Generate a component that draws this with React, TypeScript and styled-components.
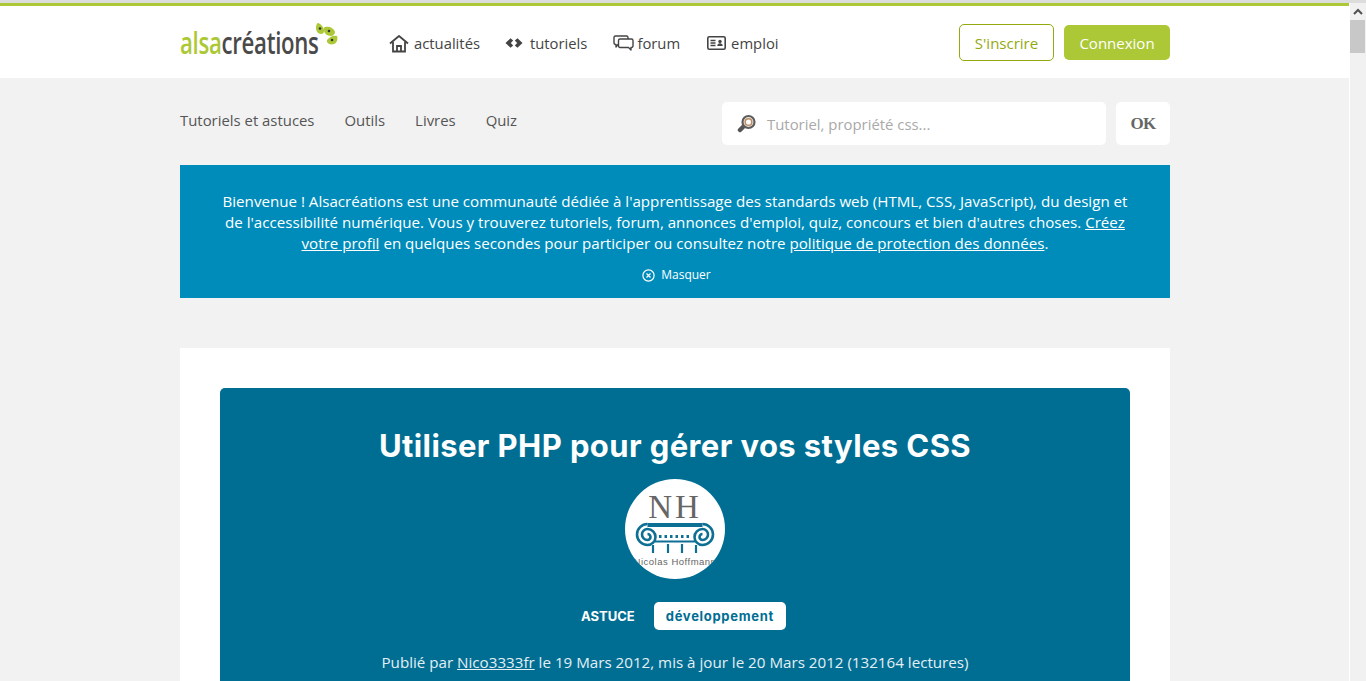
import React from 'react';
import styled, { createGlobalStyle } from 'styled-components';

const Global = createGlobalStyle`
  html, body {
    margin: 0;
    padding: 0;
    height: 100%;
    overflow: hidden;
    background: #f2f2f2;
  }
  body {
    font-family: "Open Sans", "Noto Sans", sans-serif;
    color: #444;
  }
  * { box-sizing: border-box; }
`;

const Shell = styled.div`
  display: grid;
  grid-template-columns: 1fr 16px;
  height: 681px;
  overflow: hidden;
`;

const Page = styled.div`
  min-width: 0;
  background: #f2f2f2;
  box-shadow: inset -1px 0 #fff;
`;

const Container = styled.div`
  width: 990px;
  margin: 0 auto;
`;

const Header = styled.header`
  height: 78px;
  background: #fff;
  border-top: 3px solid #dcdcdc;
`;

const GreenBar = styled.div`
  height: 3px;
  margin-right: 1px;
  background: #acc837;
`;

const HeaderRow = styled(Container)`
  display: flex;
  align-items: center;
  height: 72px;
  padding-top: 2px;
`;

const Logo = styled.a`
  display: flex;
  align-items: flex-start;
  width: 158px;
  height: 40px;
  margin-right: 51px;
  position: relative;
`;

const LogoText = styled.span`
  display: inline-block;
  font-family: "Open Sans", sans-serif;
  font-size: 30px;
  font-weight: 600;
  line-height: 40px;
  letter-spacing: -0.4px;
  transform: scaleX(0.74);
  transform-origin: left center;
  color: #4a4a4a;
  white-space: nowrap;
`;

const LogoAccent = styled.span`
  color: #acc837;
`;

const LogoDrops = styled.span`
  position: absolute;
  left: 134px;
  top: -1px;
`;

const Nav = styled.nav`
  display: flex;
  align-items: center;
  gap: 25px;
  flex: 1;
`;

const NavItem = styled.a<{ $gap?: number }>`
  display: flex;
  align-items: center;
  gap: ${(p) => p.$gap ?? 5}px;
  font-size: 14.8px;
  color: #444;
`;

const AuthButton = styled.a<{ $filled?: boolean }>`
  display: flex;
  align-items: center;
  justify-content: center;
  height: ${(p) => (p.$filled ? '35px' : '37px')};
  width: ${(p) => (p.$filled ? '106px' : '95px')};
  margin-left: ${(p) => (p.$filled ? '10px' : '0')};
  margin-bottom: 2px;
  padding-top: 1px;
  border-radius: 5px;
  font-size: 15px;
  color: ${(p) => (p.$filled ? '#fff' : '#93a90f')};
  background: ${(p) => (p.$filled ? '#acc837' : '#fff')};
  border: ${(p) => (p.$filled ? 'none' : '1px solid #93a90f')};
`;

const SubRow = styled(Container)`
  display: flex;
  justify-content: space-between;
  padding-top: 24px;
`;

const SubNav = styled.nav`
  display: flex;
  gap: 30px;
  padding-top: 8px;
`;

const SubLink = styled.a`
  font-size: 14.9px;
  line-height: 20px;
  color: #555;
`;

const Search = styled.form`
  display: flex;
  gap: 10px;
`;

const SearchField = styled.div`
  display: flex;
  align-items: center;
  gap: 11px;
  width: 384px;
  height: 43px;
  padding-left: 15px;
  background: #fff;
  border-radius: 5px;
  font-size: 14.9px;
  color: #a9a9a9;
`;

const OkButton = styled.button`
  width: 54px;
  height: 43px;
  border: 0;
  border-radius: 5px;
  background: #fff;
  color: #666;
  font-family: "Liberation Serif", serif;
  font-size: 17px;
  font-weight: 700;
  letter-spacing: -0.8px;
  padding: 0;
`;

const Banner = styled(Container)`
  height: 133px;
  margin-top: 20px;
  padding: 26px 40px 0;
  background: #008cba;
  color: #fff;
  text-align: center;
  font-size: 15.14px;
  line-height: 21px;
`;

const BannerLink = styled.a`
  color: #fff;
  text-decoration: underline;
`;

const Hide = styled.div`
  display: flex;
  align-items: center;
  justify-content: center;
  gap: 6px;
  margin-top: 11px;
  padding-left: 3px;
  font-size: 12px;
  line-height: 20px;
`;

const Card = styled(Container)`
  margin-top: 50px;
  padding: 40px;
  background: #fff;
`;

const Hero = styled.section`
  height: 400px;
  padding-top: 40px;
  background: #006e93;
  border-radius: 5px;
  color: #fff;
  text-align: center;
`;

const Title = styled.h1`
  margin: 0;
  font-family: Inter, "Open Sans", sans-serif;
  font-size: 31px;
  line-height: 36px;
  font-weight: 700;
  letter-spacing: 0.4px;
`;

const Avatar = styled.div`
  width: 100px;
  height: 100px;
  margin: 15px auto 0;
  border-radius: 50%;
  background: #fff;
  overflow: hidden;
`;

const TagRow = styled.div`
  display: flex;
  justify-content: center;
  align-items: center;
  gap: 19px;
  margin-top: 23px;
  padding-left: 17px;
`;

const Kind = styled.span`
  font-family: Inter, sans-serif;
  font-size: 13px;
  font-weight: 700;
`;

const Tag = styled.span`
  display: flex;
  align-items: center;
  height: 28px;
  padding: 0 12px;
  background: #fff;
  border-radius: 5px;
  color: #006e93;
  font-family: Inter, sans-serif;
  font-size: 13px;
  font-weight: 700;
  letter-spacing: 0.7px;
`;

const Meta = styled.p`
  margin: 21px 0 0;
  font-size: 15.17px;
  line-height: 22px;
  color: #e4eff3;
`;

const MetaLink = styled.a`
  color: #e4eff3;
  text-decoration: underline;
`;

const Scrollbar = styled.div`
  display: flex;
  flex-direction: column;
  background: #f1f1f1;
  border-top: 3px solid #dcdcdc;
`;

const ScrollArrow = styled.div`
  display: flex;
  align-items: center;
  justify-content: center;
  height: 17px;
`;

const ScrollThumb = styled.div`
  height: 33px;
  margin-right: 1px;
  background: #c8c8c8;
`;

const HomeIcon = () => (
  <svg width="20" height="19" viewBox="0 0 20 19" fill="none" stroke="#444" strokeWidth="1.8">
    <path d="M1 9.500 10 2l9 7.500" strokeLinejoin="round" />
    <path d="M4 8v9.500h12V8" />
    <path d="M8 17.500v-5.500h4v5.500" />
  </svg>
);

const CodeIcon = () => (
  <svg width="18" height="10" viewBox="0 0 18 10" fill="#444">
    <path d="M5.500.300 8.200 2.400 5.800 5l2.400 2.600-2.700 2.100L.500 5z" />
    <path d="M12.500.300 9.800 2.400 12.200 5l-2.400 2.600 2.700 2.100L17.500 5z" />
  </svg>
);

const ForumIcon = () => (
  <svg width="22" height="16" viewBox="-1 0 22 16" fill="#fff" stroke="#444" strokeWidth="1.4" strokeLinejoin="round">
    <path d="M2.500 1h11A1.500 1.500 0 0 1 15 2.500V8a1.500 1.500 0 0 1-1.500 1.500H5L3 12V9.500h-.5A1.500 1.500 0 0 1 1 8V2.500A1.500 1.500 0 0 1 2.500 1z" />
    <path d="M7 4h11.500A1.500 1.500 0 0 1 20 5.500V11a1.500 1.500 0 0 1-1.500 1.500H18V15l-2.500-2.500H7A1.500 1.500 0 0 1 5.500 11V5.500A1.500 1.500 0 0 1 7 4z" />
  </svg>
);

const JobIcon = () => (
  <svg width="21" height="14" viewBox="0 0 21 14" fill="none">
    <rect x="2.800" y="0.800" width="17.400" height="12.400" rx="1.500" stroke="#444" strokeWidth="1.600" />
    <path d="M5.500 4.500h5M5.500 7h5M5.500 9.500h5" stroke="#444" strokeWidth="1.300" />
    <circle cx="15" cy="5.500" r="1.700" fill="#444" />
    <path d="M12.300 10c0-2 1.200-2.800 2.700-2.800s2.700.8 2.700 2.800z" fill="#444" />
  </svg>
);

const SearchIcon = () => (
  <svg width="19" height="20" viewBox="0 0 19 20" fill="none">
    <path d="M6.500 12.500 3 16" stroke="#555" strokeWidth="4.500" strokeLinecap="round" />
    <circle cx="11.500" cy="8" r="6" fill="#f0e9df" stroke="#5d5d5d" strokeWidth="2.200" />
    <circle cx="11.500" cy="8" r="3.300" fill="#fff" stroke="#b98d68" strokeWidth="1.500" />
  </svg>
);

const CloseIcon = () => (
  <svg width="13" height="13" viewBox="0 0 13 13" fill="none" stroke="#fff" strokeWidth="1.200">
    <circle cx="6.500" cy="6.500" r="5.600" />
    <path d="M4.500 4.500l4 4M8.500 4.500l-4 4" />
  </svg>
);

const ChevronUp = () => (
  <svg width="10" height="7" viewBox="0 0 10 7" fill="none" stroke="#505050" strokeWidth="2">
    <path d="M1 6l4-4 4 4" />
  </svg>
);

const Drops = () => (
  <svg width="24" height="26" viewBox="0 0 24 26">
    <path d="M4 1c3 1 6 4 6 8 0 2-1 3-3 3-3 0-5-3-5-6 0-3 1-5 2-5z" fill="#acc837" />
    <path d="M11 5c4-1 9 1 10 5 0 2-2 4-4 4-4 0-7-3-7-6 0-2 0-3 1-3z" fill="#acc837" />
    <path d="M13 18c3-4 7-5 10-4 1 3 0 7-3 8-3 1-6 0-7-2z" fill="#acc837" />
    <circle cx="6" cy="6.500" r="1.300" fill="#333" />
    <circle cx="15" cy="9" r="1.300" fill="#333" />
    <circle cx="18" cy="18" r="1.300" fill="#333" />
  </svg>
);

const AvatarArt = () => (
  <svg width="100" height="100" viewBox="0 0 100 100">
    <text x="50" y="39" textAnchor="middle" fontFamily="Liberation Serif, serif" fontSize="33" letterSpacing="3" fill="#666">NH</text>
    <g fill="none" stroke="#0d6f94">
      <path d="M22.500 46H77.500" strokeWidth="4" />
      <path d="M22.500 45A10.500 10.500 0 0 0 22.500 66A8 8 0 0 0 22.500 50A5.500 5.500 0 0 0 22.500 61A3 3 0 0 0 22.500 55" strokeWidth="2.600" />
      <path d="M77.500 45A10.500 10.500 0 0 1 77.500 66A8 8 0 0 1 77.500 50A5.500 5.500 0 0 1 77.500 61A3 3 0 0 1 77.500 55" strokeWidth="2.600" />
      <path d="M34 57.500H66" strokeWidth="3" strokeDasharray="2.500 3" />
      <path d="M30 62.500H70" strokeWidth="2" />
      <path d="M28 66v8M43 65v9M57 65v9M71 66v8" strokeWidth="2.200" />
    </g>
    <text x="50" y="86" textAnchor="middle" fontFamily="Liberation Sans, sans-serif" fontSize="9.500" letterSpacing="0.500" fill="#666">Nicolas Hoffmann</text>
  </svg>
);

const App: React.FC = () => {
  return (
    <Shell>
      <Global />
      <Page>
        <Header>
          <GreenBar />
          <HeaderRow>
            <Logo>
              <LogoText>
                <LogoAccent>alsa</LogoAccent>créations
              </LogoText>
              <LogoDrops>
                <Drops />
              </LogoDrops>
            </Logo>
            <Nav>
              <NavItem><HomeIcon />actualités</NavItem>
              <NavItem $gap={7}><CodeIcon />tutoriels</NavItem>
              <NavItem $gap={3}><ForumIcon />forum</NavItem>
              <NavItem><JobIcon />emploi</NavItem>
            </Nav>
            <AuthButton>S'inscrire</AuthButton>
            <AuthButton $filled>Connexion</AuthButton>
          </HeaderRow>
        </Header>
        <SubRow>
          <SubNav>
            <SubLink>Tutoriels et astuces</SubLink>
            <SubLink>Outils</SubLink>
            <SubLink>Livres</SubLink>
            <SubLink>Quiz</SubLink>
          </SubNav>
          <Search>
            <SearchField><SearchIcon />Tutoriel, propriété css...</SearchField>
            <OkButton type="button">OK</OkButton>
          </Search>
        </SubRow>
        <Banner>
          Bienvenue ! Alsacréations est une communauté dédiée à l'apprentissage des standards web (HTML, CSS, JavaScript), du design et de l'accessibilité numérique. Vous y trouverez tutoriels, forum, annonces d'emploi, quiz, concours et bien d'autres choses. <BannerLink>Créez votre profil</BannerLink> en quelques secondes pour participer ou consultez notre <BannerLink>politique de protection des données</BannerLink>.
          <Hide><CloseIcon />Masquer</Hide>
        </Banner>
        <Card>
          <Hero>
            <Title>Utiliser PHP pour gérer vos styles CSS</Title>
            <Avatar><AvatarArt /></Avatar>
            <TagRow>
              <Kind>ASTUCE</Kind>
              <Tag>développement</Tag>
            </TagRow>
            <Meta>Publié par <MetaLink>Nico3333fr</MetaLink> le 19 Mars 2012, mis à jour le 20 Mars 2012 (132164 lectures)</Meta>
          </Hero>
        </Card>
      </Page>
      <Scrollbar>
        <ScrollArrow><ChevronUp /></ScrollArrow>
        <ScrollThumb />
      </Scrollbar>
    </Shell>
  );
};

export default App;
